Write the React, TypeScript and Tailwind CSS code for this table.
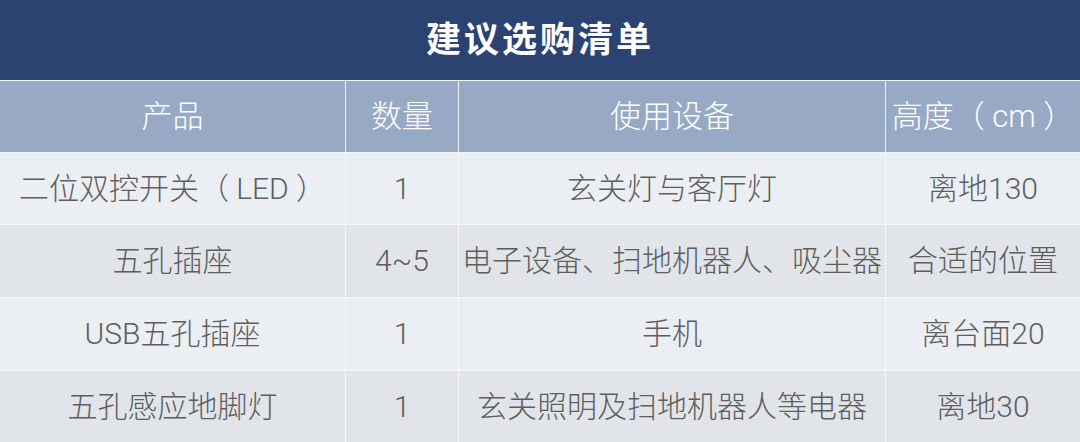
import React from "react";

const rows = [
  ["二位双控开关（ LED ）", "1", "玄关灯与客厅灯", "离地130"],
  ["五孔插座", "4~5", "电子设备、扫地机器人、吸尘器", "合适的位置"],
  ["USB五孔插座", "1", "手机", "离台面20"],
  ["五孔感应地脚灯", "1", "玄关照明及扫地机器人等电器", "离地30"],
];

const headers = ["产品", "数量", "使用设备", "高度（ cm ）"];

export default function App() {
  return (
    <div
      className="w-[1080px] h-[442px] overflow-hidden bg-white"
      style={{ fontFamily: 'Roboto, "Noto Sans CJK SC", sans-serif' }}
    >
      {/* Title */}
      <div className="h-[80px] bg-[#2c4372] flex items-center justify-center">
        <h1 className="text-white text-[35px] font-bold tracking-[3px] leading-none">建议选购清单</h1>
      </div>

      {/* Table */}
      <div className="grid grid-cols-[345px_112px_426px_1fr] grid-rows-[71px_71px_72px_72px_72px] gap-[1px] pt-[1px] bg-[#f4f6f9]">
        {headers.map((h) => (
          <div
            key={h}
            className="bg-[#97a9c5] flex items-center justify-center text-white text-[31px] font-light leading-none whitespace-nowrap"
          >
            {h}
          </div>
        ))}
        {rows.map((row, i) =>
          row.map((cell, j) => (
            <div
              key={`${i}-${j}`}
              className={`flex items-center justify-center text-[#5e5e5e] text-[30px] font-light leading-none whitespace-nowrap ${
                i % 2 === 0 ? "bg-[#ebeef2]" : "bg-[#e1e4e9]"
              }`}
            >
              {cell}
            </div>
          ))
        )}
      </div>
    </div>
  );
}
